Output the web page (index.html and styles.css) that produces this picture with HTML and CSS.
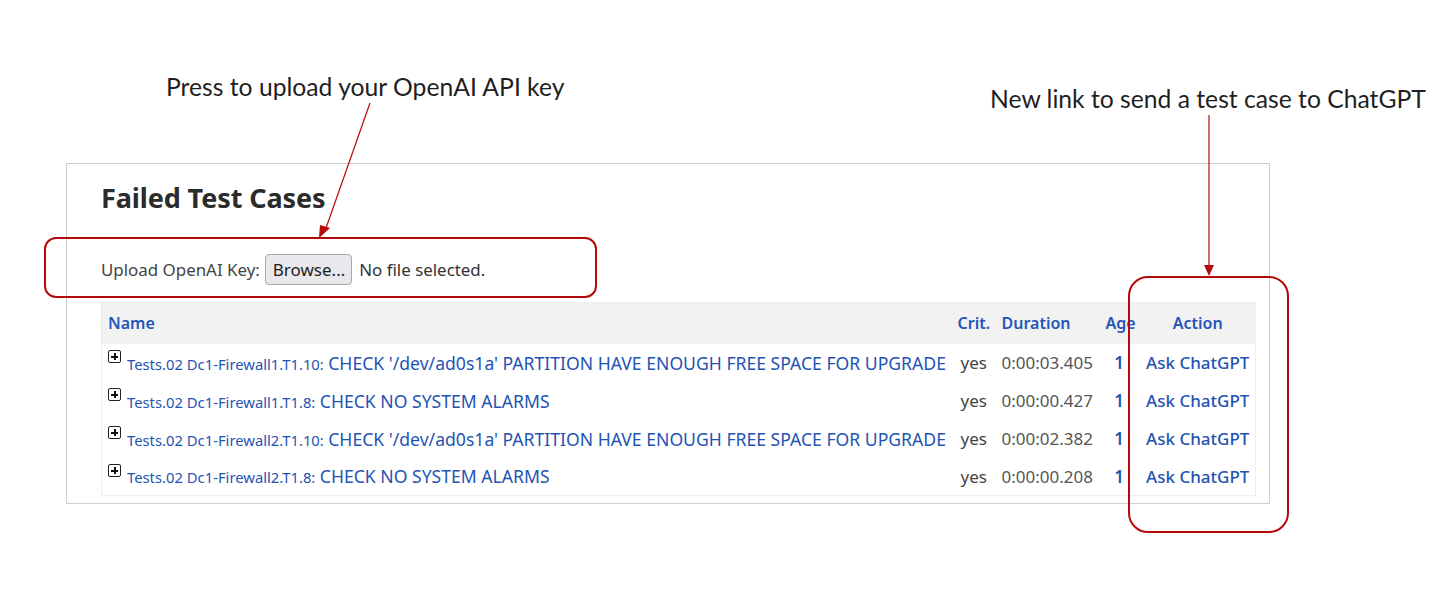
FILE: index.html
```html
<!DOCTYPE html>
<html>
<head>
<meta charset="utf-8">
<link rel="stylesheet" href="styles.css">
</head>
<body>
<div class="page">
  <div class="panel">
    <h2 class="title">Failed Test Cases</h2>
    <div class="upload">
      <span class="upload-label">Upload OpenAI Key:</span>
      <span class="browse">Browse...</span>
      <span class="nofile">No file selected.</span>
    </div>
    <table class="cases">
      <colgroup>
        <col class="c-name"><col class="c-crit"><col class="c-dur"><col class="c-age"><col class="c-act">
      </colgroup>
      <thead>
        <tr>
          <th class="h-name">Name</th>
          <th class="h-crit">Crit.</th>
          <th class="h-dur">Duration</th>
          <th class="h-age">Age</th>
          <th class="h-act">Action</th>
        </tr>
      </thead>
      <tbody>
        <tr>
          <td class="name"><span class="plus"></span><a class="suite">Tests.02 Dc1-Firewall1.T1.10:</a> <a class="test">CHECK '/dev/ad0s1a' PARTITION HAVE ENOUGH FREE SPACE FOR UPGRADE</a></td>
          <td class="crit">yes</td><td class="dur">0:00:03.405</td><td class="age">1</td><td class="act"><a>Ask ChatGPT</a></td>
        </tr>
        <tr>
          <td class="name"><span class="plus"></span><a class="suite">Tests.02 Dc1-Firewall1.T1.8:</a> <a class="test">CHECK NO SYSTEM ALARMS</a></td>
          <td class="crit">yes</td><td class="dur">0:00:00.427</td><td class="age">1</td><td class="act"><a>Ask ChatGPT</a></td>
        </tr>
        <tr>
          <td class="name"><span class="plus"></span><a class="suite">Tests.02 Dc1-Firewall2.T1.10:</a> <a class="test">CHECK '/dev/ad0s1a' PARTITION HAVE ENOUGH FREE SPACE FOR UPGRADE</a></td>
          <td class="crit">yes</td><td class="dur">0:00:02.382</td><td class="age">1</td><td class="act"><a>Ask ChatGPT</a></td>
        </tr>
        <tr>
          <td class="name"><span class="plus"></span><a class="suite">Tests.02 Dc1-Firewall2.T1.8:</a> <a class="test">CHECK NO SYSTEM ALARMS</a></td>
          <td class="crit">yes</td><td class="dur">0:00:00.208</td><td class="age">1</td><td class="act"><a>Ask ChatGPT</a></td>
        </tr>
      </tbody>
    </table>
  </div>

  <div class="note note-upload">Press to upload your OpenAI API key</div>
  <div class="note note-link">New link to send a test case to ChatGPT</div>
  <div class="callout callout-upload"></div>
  <div class="callout callout-action"></div>
  <svg class="arrows" width="1452" height="593" viewBox="0 0 1452 593">
    <line x1="370" y1="103" x2="326" y2="228" stroke="#b40a0a" stroke-width="1.2"/>
    <polygon points="319,238 320,225 330,228" fill="#b40a0a"/>
    <line x1="1209" y1="115" x2="1209" y2="266" stroke="#b40a0a" stroke-width="1.2"/>
    <polygon points="1209,276 1204,265 1214,265" fill="#b40a0a"/>
  </svg>
</div>
</body>
</html>
```

FILE: styles.css
```css
html, body {
  margin: 0;
  padding: 0;
  background: #ffffff;
}

.page {
  position: relative;
  width: 1452px;
  height: 593px;
  overflow: hidden;
  padding-top: 163px;
  box-sizing: border-box;
}

.panel {
  margin-left: 66px;
  width: 1204px;
  height: 341px;
  box-sizing: border-box;
  border: 1px solid #cfcfcf;
  padding: 17px 14px 0 34px;
  font-family: "Noto Sans", "Open Sans", sans-serif;
  color: #333333;
}

.title {
  margin: 0;
  font-family: "Noto Sans", sans-serif;
  font-weight: 700;
  font-size: 27px;
  line-height: 34px;
  color: #2b2b2b;
  letter-spacing: -0.1px;
}

.upload {
  display: flex;
  align-items: center;
  margin-top: 38px;
  height: 32px;
  font-size: 16.9px;
  color: #444444;
}

.upload-label {
  margin-right: 5px;
}

.browse {
  display: inline-flex;
  align-items: center;
  height: 31px;
  padding: 0 6px 0 7px;
  box-sizing: border-box;
  border: 1px solid #a9a9a9;
  border-radius: 4px;
  background: #e9e9ed;
  color: #1e1e1e;
  font-size: 17px;
  margin-right: 7px;
}

.nofile {
  color: #333;
}

.cases {
  margin-top: 17px;
  width: 1154px;
  border-collapse: collapse;
  table-layout: fixed;
  border: 1px solid #eeeeee;
}

.c-name { width: 851px; }
.c-crit { width: 46px; }
.c-dur { width: 103px; }
.c-age { width: 29px; }
.c-act { width: 125px; }

.cases thead tr {
  background: #f2f2f2;
  height: 41px;
}

.cases th {
  font-weight: 600;
  font-size: 16px;
  color: #2456b8;
  text-align: left;
  padding: 0;
  white-space: nowrap;
}

.h-name { padding-left: 6px !important; }
.h-crit { padding-left: 5px !important; }
.h-dur { padding-left: 3px !important; }
.h-age { padding-left: 4px !important; overflow: visible; }
.h-act { text-align: center !important; padding-left: 10px !important; }

.cases tbody tr {
  height: 38px;
}

.cases td {
  padding: 0;
  white-space: nowrap;
  font-size: 17px;
  vertical-align: middle;
}

.name {
  padding-left: 6px !important;
  padding-top: 0 !important;
}

.plus {
  display: inline-block;
  position: relative;
  top: -8px;
  width: 11px;
  height: 11px;
  border: 1px solid #222;
  border-radius: 2px;
  margin-right: 6px;
  vertical-align: middle;
  background:
    linear-gradient(#111, #111) center / 7px 2px no-repeat,
    linear-gradient(#111, #111) center / 2px 7px no-repeat;
}

.suite {
  color: #1f54b3;
  font-size: 14.8px;
}

.test {
  color: #1f54b3;
  font-size: 17.6px;
}

.crit {
  color: #444;
  padding-left: 8px !important;
}

.dur {
  color: #555;
  padding-left: 3px !important;
}

.age {
  color: #1f54b3;
  font-weight: 600;
  text-align: center;
  padding-left: 6px !important;
}

.act {
  text-align: center;
  padding-left: 10px !important;
}

.act a {
  color: #1f54b3;
  font-weight: 500;
}

.note {
  position: absolute;
  font-family: "Lato", "Noto Sans", sans-serif;
  font-size: 24.7px;
  color: #1f1f1f;
  white-space: nowrap;
}

.note-upload {
  left: 166px;
  top: 72px;
}

.note-link {
  left: 990px;
  top: 84px;
}

.callout {
  position: absolute;
  border: 2.5px solid #b40a0a;
  box-sizing: border-box;
}

.callout-upload {
  left: 44px;
  top: 237px;
  width: 553px;
  height: 61px;
  border-radius: 12px;
}

.callout-action {
  left: 1128px;
  top: 276px;
  width: 161px;
  height: 257px;
  border-radius: 20px;
}

.arrows {
  position: absolute;
  left: 0;
  top: 0;
}
```
